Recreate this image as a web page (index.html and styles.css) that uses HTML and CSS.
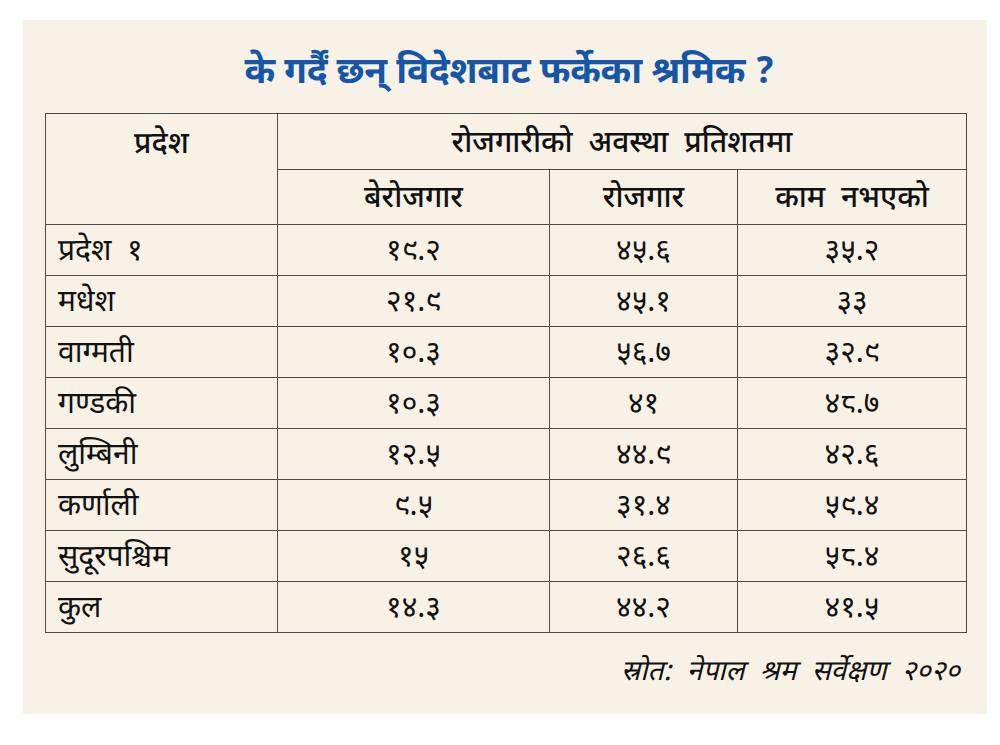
FILE: index.html
```html
<!DOCTYPE html>
<html lang="ne">
<head>
<meta charset="utf-8">
<title>के गर्दैं छन् विदेशबाट फर्केका श्रमिक ?</title>
<link rel="stylesheet" href="styles.css">
</head>
<body>
<div class="card">
  <h1 class="title">के गर्दैं छन् विदेशबाट फर्केका श्रमिक ?</h1>
  <table class="data">
    <colgroup>
      <col class="c1"><col class="c2"><col class="c3"><col class="c4">
    </colgroup>
    <thead>
      <tr class="h1row">
        <th rowspan="2" class="top">प्रदेश</th>
        <th colspan="3">रोजगारीको अवस्था प्रतिशतमा</th>
      </tr>
      <tr class="h2row">
        <th>बेरोजगार</th>
        <th>रोजगार</th>
        <th>काम नभएको</th>
      </tr>
    </thead>
    <tbody>
      <tr><td class="name">प्रदेश &nbsp;१</td><td>१९.२</td><td>४५.६</td><td>३५.२</td></tr>
      <tr><td class="name">मधेश</td><td>२१.९</td><td>४५.१</td><td>३३</td></tr>
      <tr><td class="name">वाग्मती</td><td>१०.३</td><td>५६.७</td><td>३२.९</td></tr>
      <tr><td class="name">गण्डकी</td><td>१०.३</td><td>४१</td><td>४८.७</td></tr>
      <tr><td class="name">लुम्बिनी</td><td>१२.५</td><td>४४.९</td><td>४२.६</td></tr>
      <tr><td class="name">कर्णाली</td><td>९.५</td><td>३१.४</td><td>५९.४</td></tr>
      <tr><td class="name">सुदूरपश्चिम</td><td>१५</td><td>२६.६</td><td>५८.४</td></tr>
      <tr><td class="name">कुल</td><td>१४.३</td><td>४४.२</td><td>४१.५</td></tr>
    </tbody>
  </table>
  <p class="source">स्रोत: नेपाल श्रम सर्वेक्षण २०२०</p>
</div>
</body>
</html>
```

FILE: styles.css
```css
html, body {
  margin: 0;
  padding: 0;
  background: #ffffff;
}
body {
  width: 1000px;
  height: 745px;
  overflow: hidden;
  font-family: "Noto Sans Devanagari", "Noto Sans", "Lohit Devanagari", sans-serif;
  color: #111111;
}
.card {
  margin: 20px 0 0 23px;
  width: 964px;
  height: 694px;
  background: #f7f1e6;
  box-sizing: border-box;
  padding: 32px 21px 0 22px;
}
.title {
  margin: 0;
  text-align: center;
  color: #1656a6;
  font-size: 37px;
  font-weight: 700;
  line-height: 44px;
  height: 61px;
  padding-left: 8px;
  letter-spacing: -0.3px;
}
.data {
  border-collapse: collapse;
  width: 921px;
  table-layout: fixed;
}
.c1 { width: 232px; }
.c2 { width: 272px; }
.c3 { width: 188px; }
.c4 { width: 229px; }
.data th,
.data td {
  border: 1.5px solid #4d4d4a;
  padding: 6px 0 0;
  text-align: center;
  font-size: 30px;
  line-height: 40px;
  font-weight: 400;
  word-spacing: 8px;
}
.data th {
  font-weight: 500;
}
.h1row th { height: 49px; }
.h2row th { height: 48px; }
.data th.top {
  vertical-align: top;
  padding-top: 12px;
}
.data td {
  height: 44px;
}
.data td.name {
  text-align: left;
  padding-left: 12px;
  word-spacing: 0;
}
.source {
  margin: 20px 6px 0 0;
  text-align: right;
  font-style: italic;
  font-size: 28px;
  line-height: 40px;
  word-spacing: 8px;
}
```
